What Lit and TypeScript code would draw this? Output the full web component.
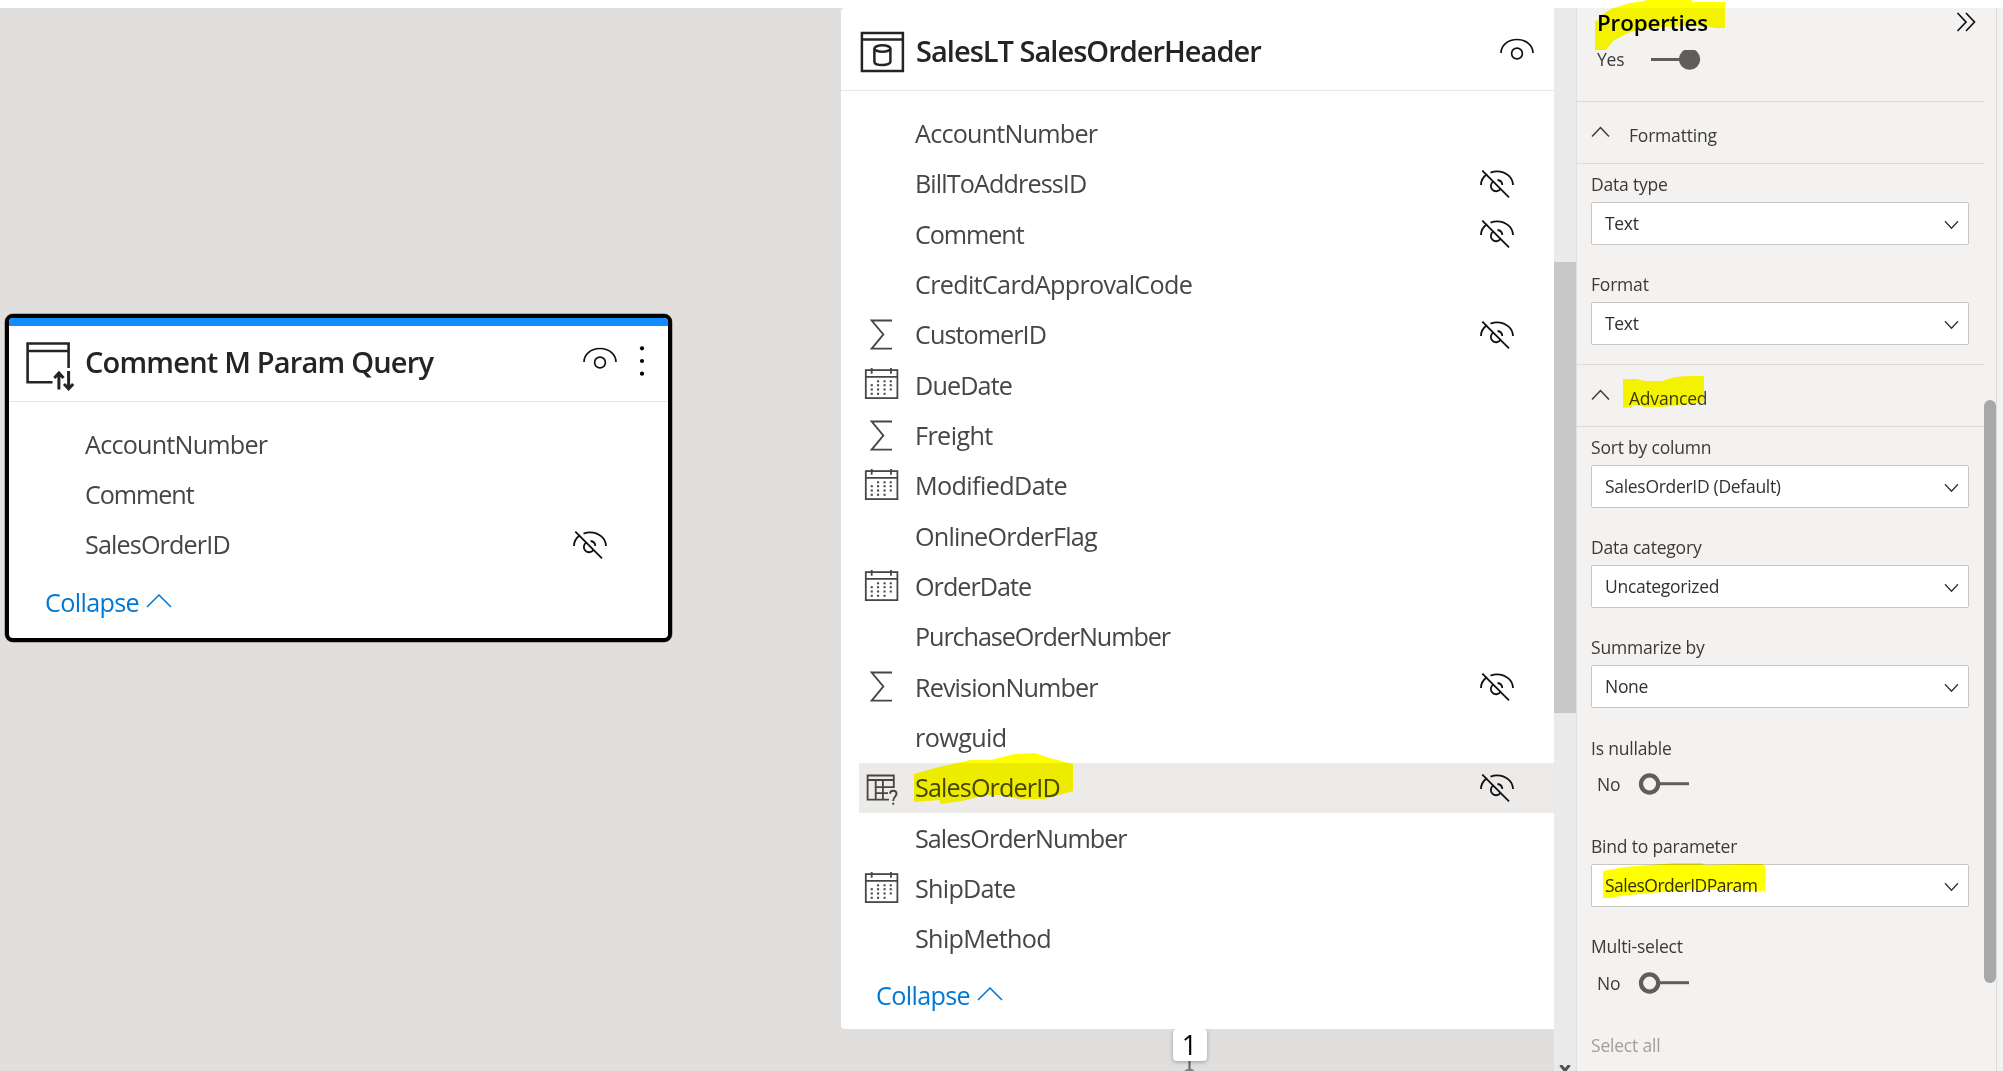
import { LitElement, html, css, svg, nothing } from "lit";
import { customElement, property } from "lit/decorators.js";
import { styleMap } from "lit/directives/style-map.js";

type Field = { name: string; track: number; icon?: "sum" | "date" | "param"; hidden?: boolean; selected?: boolean };

const queryFields: Field[] = [
  { name: "AccountNumber", track: -0.8 },
  { name: "Comment", track: -1.1 },
  { name: "SalesOrderID", track: -0.88, hidden: true },
];

const orderFields: Field[] = [
  { name: "AccountNumber", track: -0.8 },
  { name: "BillToAddressID", track: -0.9, hidden: true },
  { name: "Comment", track: -1.1, hidden: true },
  { name: "CreditCardApprovalCode", track: -0.69 },
  { name: "CustomerID", track: -0.95, icon: "sum", hidden: true },
  { name: "DueDate", track: -0.9, icon: "date" },
  { name: "Freight", track: -0.6, icon: "sum" },
  { name: "ModifiedDate", track: -0.62, icon: "date" },
  { name: "OnlineOrderFlag", track: -0.82 },
  { name: "OrderDate", track: -1, icon: "date" },
  { name: "PurchaseOrderNumber", track: -1.1 },
  { name: "RevisionNumber", track: -0.9, icon: "sum", hidden: true },
  { name: "rowguid", track: -0.6 },
  { name: "SalesOrderID", track: -0.88, icon: "param", hidden: true, selected: true },
  { name: "SalesOrderNumber", track: -1 },
  { name: "ShipDate", track: -0.74, icon: "date" },
  { name: "ShipMethod", track: -0.69 },
];

const eye = svg`<g fill="none" stroke="#111" stroke-width="1.7"><path d="M1 15C1 7.500 8 1.500 17 1.500S33 7.500 33 15"/><circle cx="17" cy="15.500" r="5.400"/></g>`;
const eyeOff = svg`<g fill="none" stroke="#111" stroke-width="1.8"><path d="M1 15C1 11 3 7 7 4.300M10.500 2.700C12.500 1.900 15 1.300 17 1.300 26 1.300 33 7.500 33 15"/><path d="M13.300 11.500A5.300 5.300 0 1 0 20.500 19M17.500 10A5.300 5.300 0 0 1 22.300 15"/><path d="M2.300 .6L29 27.300"/></g>`;

const dateDots = [
  [15, 13.3], [21.5, 13.3], [27.700, 13.3],
  [8.7, 17.2], [15, 17.2], [21.5, 17.2], [27.700, 17.2],
  [8.7, 21.5], [15, 21.5], [21.5, 21.5], [27.700, 21.5],
  [8.7, 25.8], [15, 25.8], [21.5, 25.8],
];

const fieldIcons = {
  sum: svg`<path d="M29 2.500H8.700L20.300 16.500 8.700 30.600H29" fill="none" stroke="#484644" stroke-width="1.900"/>`,
  date: svg`<g fill="none" stroke="#484644"><rect x="2.800" y="2.100" width="31.600" height="28" stroke-width="1.800"/><path d="M2.800 8.800H34.400M8.700 0V5.800M28 0V5.800" stroke-width="1.800"/></g>
    ${dateDots.map(([x, y]) => svg`<rect x=${x - 1} y=${y - 1} width="2.100" height="2" fill="#484644"/>`)}`,
  param: svg`<g fill="none" stroke="#484644" stroke-width="1.800"><path d="M26 28.700H4.600V4.500H30.800V16.200"/><path d="M4.600 9H30.800M12.700 9V28.700M19.900 9V28.700M12.700 16.200H31.500M12.700 22.200H25"/><path d="M27 22.700C27 18.700 33.500 18.700 33.500 22.700 33.500 25.700 30.200 25.700 30.200 30" stroke-width="1.900"/></g><rect x="29.200" y="31.700" width="2" height="2" fill="#484644"/>`,
};

@customElement("table-card")
class TableCard extends LitElement {
  @property() heading = "";
  @property() kind: "query" | "table" = "table";
  @property({ attribute: false }) fields: Field[] = [];

  static styles = css`
    :host { display: block; font-family: "Segoe UI", "Open Sans", sans-serif; color: #484644; }
    .card { box-sizing: border-box; width: 713px; height: 1021px; background: #fff; border-radius: 4px 0 0 4px; display: flex; flex-direction: column; }
    .head { box-sizing: border-box; height: 82.500px; flex: none; border-bottom: 1px solid #e6e6e6; display: flex; align-items: center; padding: 0 20px 0 17px; }
    .kind { width: 50px; height: 50px; flex: none; margin-top: 8px; }
    .title { flex: 1; font-size: 29px; line-height: 40px; font-weight: 600; color: #252423; letter-spacing: -0.980px; margin-left: 8px; padding-top: 5px; white-space: nowrap; }
    .eye { width: 34px; height: 28px; flex: none; margin-top: 7px; }
    .eye.hidden { margin-top: 0; }
    .more { width: 6px; height: 32px; margin: -6px 0 0 22px; }
    .list { padding: 18px 0 0 18px; }
    .row { height: 50.330px; display: flex; align-items: center; box-sizing: border-box; padding-right: 40px; }
    .row.selected { background: #ecebe9; }
    .slot { width: 36px; height: 34px; margin: 0 16px 0 4px; flex: none; }
    .name { flex: 1; font-size: 25.200px; line-height: 36px; padding-bottom: 1px; white-space: nowrap; }
    .collapse { display: flex; align-items: center; gap: 7px; padding: 12.500px 0 0 35px; font-size: 25.200px; line-height: 36px; letter-spacing: -0.650px; color: #0078d4; }
    .chev { width: 26px; height: 14px; margin-top: -2px; }
    .query { width: 667px; height: 327.500px; border: 4px solid #000; border-radius: 8px; box-shadow: 0 0 0 .5px #777; overflow: hidden; }
    .query .head { border-top: 8px solid #118dff; height: 84px; padding: 0 23px 0 16px; }
    .query .title { margin-left: 10px; padding: 0 0 4px; letter-spacing: -0.800px; }
    .query .kind { margin-top: 4px; }
    .query .head .eye { margin-top: -6px; }
    .query .list { padding: 17px 0 0 6px; }
    .query .row { padding-right: 61px; }
    .query .collapse { padding: 14px 0 0 36px; }
    .query .slot { margin-right: 30px; }
  `;

  render() {
    const query = this.kind === "query";
    return html`<div class="card ${this.kind}">
      <div class="head">
        <svg class="kind" viewBox="0 0 50 50">${query
          ? svg`<g fill="none" stroke="#252423" stroke-width="2.600"><path d="M43.600 27V2.500H2.600V41.300H27.500M2.600 10H43.600"/><path d="M33.900 48.500V33M29.300 37L33.900 32 38.500 37M43.600 30V47M39 43L43.600 47.800 48.200 43" stroke-width="3"/></g>`
          : svg`<g fill="none" stroke="#252423" stroke-width="2.500"><rect x="3.900" y="5" width="41" height="38"/><path d="M3.900 11.500H44.900"/><ellipse cx="24.400" cy="20.500" rx="8" ry="3.200"/><path d="M16.400 20.500V33.500C16.400 38.300 32.400 38.300 32.400 33.500V20.500"/></g>`}
        </svg>
        <span class="title">${this.heading}</span>
        <svg class="eye" viewBox="0 0 34 28">${eye}</svg>
        ${query
          ? html`<svg class="more" viewBox="0 0 6 32"><circle cx="3" cy="3.300" r="2.100"/><circle cx="3" cy="16" r="2.100"/><circle cx="3" cy="28.700" r="2.100"/></svg>`
          : nothing}
      </div>
      <div class="list">
        ${this.fields.map((f) => html`<div class="row ${f.selected ? "selected" : ""}">
          <svg class="slot" viewBox="0 0 36 34">${f.icon ? fieldIcons[f.icon] : nothing}</svg>
          <span class="name" style=${styleMap({ letterSpacing: `${f.track}px` })}>${f.name}</span>
          ${f.hidden ? html`<svg class="eye hidden" viewBox="0 0 34 28">${eyeOff}</svg>` : nothing}
        </div>`)}
      </div>
      <div class="collapse"><span>Collapse</span>
        <svg class="chev" viewBox="0 0 26 14"><path d="M1 13L13 1 25 13" fill="none" stroke="#0078d4" stroke-width="1.500"/></svg>
      </div>
    </div>`;
  }
}

@customElement("prop-select")
class PropSelect extends LitElement {
  @property() label = "";
  @property() value = "";
  @property({ type: Number }) track = -0.3;
  static styles = css`
    :host { display: block; height: 100.200px; font-family: "Segoe UI", "Open Sans", sans-serif; font-size: 17.500px; letter-spacing: -0.200px; color: #3b3a39; }
    .label { display: block; line-height: 24px; height: 30px; }
    .box { box-sizing: border-box; width: 378px; height: 43px; border: 1px solid #c8c6c4; border-radius: 2px; background: #fff; display: flex; align-items: center; justify-content: space-between; padding: 0 9px 1px 13px; color: #323130; line-height: 24px; }
    svg { width: 15px; height: 10px; margin-top: 3px; }
  `;
  render() {
    return html`<span class="label">${this.label}</span>
      <div class="box"><span style=${styleMap({ letterSpacing: `${this.track}px` })}>${this.value}</span><svg viewBox="0 0 15 10"><path d="M1 1.300L7.500 8.300 14 1.300" fill="none" stroke="#323130" stroke-width="1.300"/></svg></div>`;
  }
}

@customElement("app-root")
class AppRoot extends LitElement {
  static styles = css`
    :host { display: block; width: 2003px; height: 1071px; overflow: hidden; position: relative; background: #fff; font-family: "Segoe UI", "Open Sans", sans-serif; }
    .shell { display: grid; grid-template-columns: 1554px 22px 427px; height: 1063px; padding-top: 8px; }
    .canvas { background: #e0dfdd; position: relative; overflow: hidden; }
    .node-query { position: absolute; left: 5px; top: 306px; }
    .node-orders { position: absolute; left: 841px; top: 0; }
    .badge { position: absolute; left: 1172.500px; top: 1021px; width: 34px; height: 32px; border-radius: 4px; background: #fff; box-shadow: 0 1px 4px rgba(0,0,0,.3); text-align: center; font-size: 27px; line-height: 32px; color: #000; }
    .link { position: absolute; left: 1182px; top: 1053px; width: 16px; height: 10px; }
    .hbar { background: #eaeaea; display: flex; flex-direction: column; justify-content: space-between; }
    .thumb { height: 451px; margin-top: 254px; background: #c8c8c8; }
    .hbar svg { width: 22px; height: 6px; }
    .panel { background: #f3f2f1; border-left: 1px solid #e1dfdd; display: grid; grid-template-columns: 407px 12px 1fr; font-size: 17.500px; letter-spacing: -0.200px; color: #3b3a39; }
    .content { display: flex; flex-direction: column; height: 1063px; }
    .top { height: 30px; display: flex; justify-content: space-between; align-items: flex-start; padding: 0 8px 0 20px; flex: none; }
    .top span { font-size: 22.300px; line-height: 30px; font-weight: 600; color: #000; letter-spacing: -0.100px; }
    .top svg { width: 20px; height: 20px; margin-top: 4px; }
    .switch { display: flex; align-items: center; padding-left: 20px; height: 24px; flex: none; }
    .switch span { width: 40px; line-height: 24px; }
    .switch svg { width: 60px; height: 24px; flex: none; }
    .switch.first { height: 64px; align-items: flex-start; box-sizing: border-box; padding: 9px 0 0 20px; border-bottom: 1px solid #dddbd9; }
    .switch.first svg { height: 21px; margin: 3px 0 0 4px; }
    .section { box-sizing: border-box; height: 62px; flex: none; border-bottom: 1px solid #dddbd9; display: flex; align-items: center; padding: 5px 0 0 14px; gap: 19px; line-height: 24px; }
    .section svg { width: 19px; height: 12px; margin-top: -6px; }
    .group { padding: 8px 0 0 14px; }
    .two { height: 192px; border-bottom: 1px solid #dddbd9; }
    .label { display: block; line-height: 24px; }
    .nullable { height: 98.600px; }
    .nullable .switch { padding-left: 6px; margin-top: 12.500px; }
    .muted { color: #a19f9d; }
    .vthumb { height: 583px; margin-top: 392px; border-radius: 6px; background: #a8a8a8; }
    .edge { border-left: 1px solid #dddbd9; }
    .marker { position: absolute; left: 0; top: 0; width: 2003px; height: 1071px; mix-blend-mode: multiply; pointer-events: none; }
  `;

  private off() {
    return html`<svg viewBox="0 0 60 24"><g fill="none" stroke="#605e5c"><circle cx="12.600" cy="12" r="8.600" stroke-width="4.300"/><path d="M23 11.700H52" stroke-width="3"/></g></svg>`;
  }

  render() {
    return html`<div class="shell">
      <div class="canvas">
        <svg class="link" viewBox="0 0 16 10"><path d="M7.500 0V10" stroke="#605e5c" stroke-width="2"/><circle cx="7.500" cy="14" r="6.500" fill="#808080"/></svg>
        <div class="badge">1</div>
        <table-card class="node-query" kind="query" heading="Comment M Param Query" .fields=${queryFields}></table-card>
        <table-card class="node-orders" heading="SalesLT SalesOrderHeader" .fields=${orderFields}></table-card>
      </div>
      <div class="hbar"><div class="thumb"></div>
        <svg viewBox="0 0 22 6"><path d="M6.500 0L11 5.500 15.500 0" fill="none" stroke="#505050" stroke-width="3"/></svg>
      </div>
      <div class="panel">
        <div class="content">
          <div class="top"><span>Properties</span>
            <svg viewBox="0 0 20 20"><path d="M1.500 1L10 10 1.500 19M10 1L18.500 10 10 19" fill="none" stroke="#111" stroke-width="1.700"/></svg>
          </div>
          <div class="switch first"><span>Yes</span>
            <svg viewBox="0 3 60 21"><path d="M10 12.500H42" stroke="#605e5c" stroke-width="3"/><circle cx="48.600" cy="12.200" r="10.600" fill="#605e5c"/></svg>
          </div>
          <div class="section"><svg viewBox="0 0 19 12"><path d="M1 10.500L9.500 1.500 18 10.500" fill="none" stroke="#3b3a39" stroke-width="1.500"/></svg><span>Formatting</span></div>
          <div class="group two">
            <prop-select label="Data type" value="Text"></prop-select>
            <prop-select label="Format" value="Text"></prop-select>
          </div>
          <div class="section"><svg viewBox="0 0 19 12"><path d="M1 10.500L9.500 1.500 18 10.500" fill="none" stroke="#3b3a39" stroke-width="1.500"/></svg><span>Advanced</span></div>
          <div class="group">
            <prop-select label="Sort by column" value="SalesOrderID (Default)"></prop-select>
            <prop-select label="Data category" value="Uncategorized"></prop-select>
            <prop-select label="Summarize by" value="None"></prop-select>
            <div class="nullable"><span class="label">Is nullable</span><div class="switch"><span>No</span>${this.off()}</div></div>
            <prop-select label="Bind to parameter" value="SalesOrderIDParam" track="-0.52"></prop-select>
            <div class="nullable"><span class="label">Multi-select</span><div class="switch"><span>No</span>${this.off()}</div></div>
            <span class="label muted">Select all</span>
          </div>
        </div>
        <div><div class="vthumb"></div></div>
        <div class="edge"></div>
      </div>
    </div>
    <svg class="marker" viewBox="0 0 2003 1071"><g fill="#ff0">
      <path d="M1595 50V21.500L1598 20 1603 14 1611 9 1620 6 1630 3 1638 2 1645 1V0H1692V2H1725V28H1715L1709 26.500 1685 26 1662 27 1638 30 1628 33 1613 41 1606 50Z"/>
      <path d="M914 774L935 768 970 760H990L1015 754 1035 753 1050 758 1073 764V791L1045 799H1020L1000 795H985L962 801 940 804V800L914 802Z"/>
      <path d="M1623 379H1637L1645 381H1662L1675 377 1690 376H1704V402L1680 405 1662 407H1643V406L1632 405V407.500H1623Z"/>
      <path d="M1603 871L1625 867 1650 865 1675 863H1703V865L1740 864H1762L1765 866V891L1740 890H1690L1650 893 1620 896 1612 898H1603Z"/>
    </g></svg>`;
  }
}
